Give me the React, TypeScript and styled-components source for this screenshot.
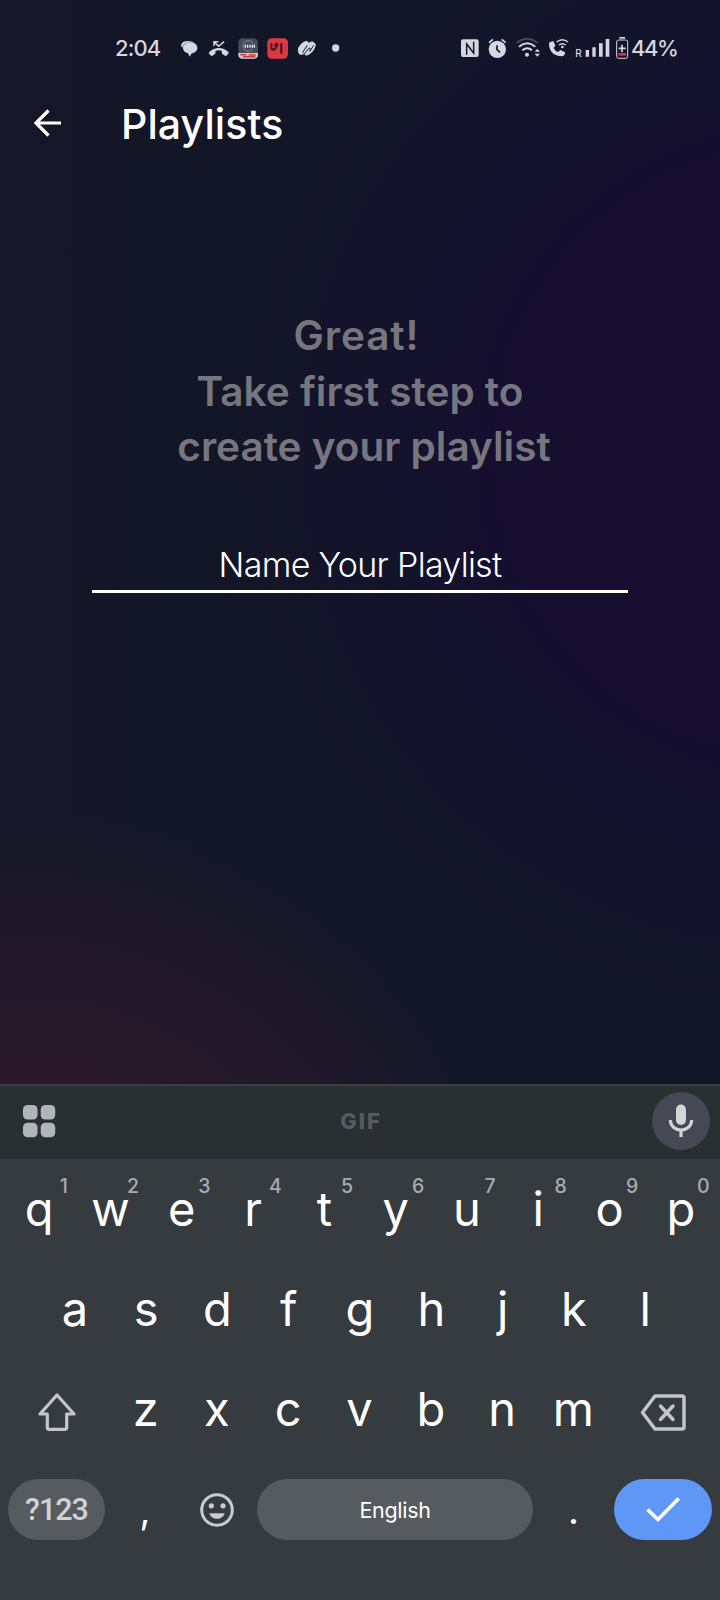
import React from 'react';
import styled, { createGlobalStyle } from 'styled-components';

const GlobalStyle = createGlobalStyle`
  * { box-sizing: border-box; }
  html, body { margin: 0; padding: 0; background: #141628; }
  svg { display: block; flex: none; }
`;

const Screen = styled.div`
  width: 720px;
  height: 1600px;
  display: flex;
  flex-direction: column;
  overflow: hidden;
  color: #fff;
  font-family: Inter, Roboto, sans-serif;
  background:
    radial-gradient(circle at 30px 1300px, #291829 0, #291829 230px, #20182a 350px, rgba(25, 23, 39, 0.9) 430px, rgba(19, 22, 39, 0) 490px),
    radial-gradient(circle at 800px 450px, #160f30 0, #160f30 300px, rgba(20, 17, 46, 0.75) 400px, rgba(19, 22, 39, 0) 560px),
    linear-gradient(90deg, #151627, #131627 240px);
`;

const StatusBar = styled.header`
  height: 96px;
  display: flex;
  align-items: center;
  justify-content: space-between;
  padding: 0 44px 0 115px;
  color: #d5d7e0;
`;

const StatusGroup = styled.div`
  display: flex;
  align-items: center;
`;

const StatusText = styled.span<{ $width: number; $spacing: number }>`
  width: ${(p) => p.$width}px;
  font-size: 22px;
  font-weight: 450;
  line-height: 24px;
  letter-spacing: ${(p) => p.$spacing}px;
  white-space: nowrap;
`;

const AppBar = styled.nav`
  height: 56px;
  display: flex;
  align-items: center;
  padding-left: 33px;
  gap: 60px;
`;

const Title = styled.h1`
  margin: 0;
  font-size: 41px;
  font-weight: 500;
  line-height: 56px;
  letter-spacing: 0.1px;
`;

const BackIcon = styled.svg`
  margin-bottom: 3px;
`;

const Main = styled.main`
  flex: 1;
  display: flex;
  flex-direction: column;
  align-items: center;
  padding-top: 156px;
`;

const Prompt = styled.p`
  margin: 0;
  display: flex;
  flex-direction: column;
  align-items: center;
  color: #77767f;
  font-size: 40.5px;
  font-weight: 600;
  line-height: 55.5px;
`;

const PromptLine = styled.span<{ $spacing: number; $shift?: number }>`
  letter-spacing: ${(p) => p.$spacing}px;
  margin-left: ${(p) => p.$shift ?? 0}px;
  white-space: nowrap;
`;

const NameField = styled.div`
  width: 536px;
  height: 53px;
  margin-top: 65px;
  border-bottom: 3px solid #fff;
  text-align: center;
  font-size: 34px;
  font-weight: 300;
  line-height: 49px;
  letter-spacing: -0.7px;
`;

const Keyboard = styled.section`
  height: 516px;
  display: flex;
  flex-direction: column;
  background: #363b3f;
`;

const Toolbar = styled.div`
  height: 75px;
  display: flex;
  align-items: center;
  justify-content: space-between;
  padding: 0 10px 4px 22px;
  border-top: 2px solid #3a4043;
  background: #2a2f32;
`;

const GifLabel = styled.span`
  color: #565b5f;
  font-size: 22px;
  font-weight: 800;
  letter-spacing: 2px;
  margin-left: 14px;
`;

const MicButton = styled.div`
  width: 58px;
  height: 58px;
  border-radius: 50%;
  display: flex;
  align-items: center;
  justify-content: center;
  background: #464953;
`;

const KeyRow = styled.div<{ $inset: number }>`
  height: 100px;
  display: flex;
  align-items: center;
  padding: 0 ${(p) => p.$inset}px;
`;

const Key = styled.div<{ $width?: number; $drop?: number }>`
  position: relative;
  width: ${(p) => p.$width ?? 71.3}px;
  height: 100px;
  display: flex;
  align-items: center;
  justify-content: center;
  padding-top: ${(p) => p.$drop ?? 0}px;
  font-size: 47px;
  font-weight: 400;
  line-height: 60px;
`;

const PunctuationKey = styled(Key)`
  font-size: 38px;
`;

const Hint = styled.span`
  position: absolute;
  top: 15px;
  right: 7px;
  text-align: right;
  color: #a9abaf;
  font-size: 19.5px;
  font-weight: 450;
  line-height: 24px;
`;

const Pill = styled.div<{ $width: number; $color: string; $ml?: number }>`
  width: ${(p) => p.$width}px;
  height: 61px;
  margin-left: ${(p) => p.$ml ?? 0}px;
  border-radius: 31px;
  display: flex;
  align-items: center;
  justify-content: center;
  background: ${(p) => p.$color};
`;

const SymbolsLabel = styled.span`
  color: #d0d2d6;
  font-size: 30.5px;
  font-weight: 500;
  letter-spacing: -1px;
  font-family: Roboto, Inter, sans-serif;
`;

const SpaceLabel = styled.span`
  font-size: 21.5px;
  letter-spacing: -0.3px;
`;

const BottomRow = styled(KeyRow)`
  height: 101px;
`;

/* Status glyphs share one 24px-high drawing band, three units to the pixel. */
function Glyph({ x, w, children }: { x: number; w: number; children: React.ReactNode }) {
  return (
    <svg width={w / 3} height={24} viewBox={`${x} 48 ${w} 72`} fill="currentColor">
      {children}
    </svg>
  );
}

const numbered = 'qwertyuiop'.split('').map((letter, i) => ({ letter, hint: String((i + 1) % 10) }));

export default function App() {
  return (
    <>
      <GlobalStyle />
      <Screen>
        <StatusBar>
          <StatusGroup>
            <StatusText $width={65} $spacing={-0.9}>2:04</StatusText>
            <Glyph x={240} w={84}>
              <path d="M245 82c-5-10 4-19 18-19 10 0 17 3 19 6-14-5-32 0-34 13z" />
              <path d="M249 84c0-9 9-17 22-17s21 8 21 17c0 8-7 15-18 17l-5 9-5-10c-9-2-15-8-15-16z" />
            </Glyph>
            <Glyph x={324} w={87}>
              <path d="M341 65l15 14 16-14M342 78V65h13" fill="none" stroke="currentColor" strokeWidth="4.5" />
              <path d="M328 96c16-16 41-16 57 0 2 2 1 4-1 6l-5 5c-2 1-4 1-6-1l-7-5-1-9c-6-2-12-2-18 0l-1 9-7 5c-2 2-4 2-6 1l-5-5c-2-2-2-4 0-6z" />
            </Glyph>
            <Glyph x={411} w={87}>
              <rect x="415" y="55" width="59" height="61" rx="13" fill="#454b57" />
              <path d="M415 99h59v5c0 8-5 12-12 12h-35c-7 0-12-4-12-12z" fill="#c9ccd2" />
              <circle cx="445" cy="78" r="16" fill="none" stroke="#858b95" strokeWidth="3" />
              <rect x="432" y="71" width="34" height="15" fill="#454b57" />
              <path d="M436 74v9M443 74v9M450 74v9M457 74v9M463 74v9" stroke="#fff" strokeWidth="3.5" />
              <path d="M421 104h18M429 110h37M446 105h21" stroke="#d8343d" strokeWidth="4.5" />
            </Glyph>
            <Glyph x={498} w={90}>
              <rect x="502" y="55" width="62" height="61" rx="13" fill="#dc3941" />
              <path d="M514 70v12c0 10 12 8 14 0l6-11M524 78l7-9M544 70v31" fill="none" stroke="#4b1425" strokeWidth="6.5" />
            </Glyph>
            <Glyph x={588} w={100}>
              <path d="M594 92c-2-9 8-21 18-27 8-4 15-1 13 5 8-7 16-7 17-1 5 0 7 5 4 11-3 11-12 20-21 25-6 3-11 1-12-4-6 5-18 6-19-9z" />
              <path d="M608 97l14-21M610 99c4 3 7 0 9-4l6-9c5-5 7 0 4 5M629 95l12-19" fill="none" stroke="#141628" strokeWidth="3" />
            </Glyph>
            <Glyph x={688} w={40}>
              <circle cx="708" cy="84" r="11" />
            </Glyph>
          </StatusGroup>
          <StatusGroup>
            <Glyph x={60} w={80}>
              <rect x="63" y="58" width="53" height="53" rx="6" />
              <path d="M80 104V72l12 15M101 65v34L89 84" fill="none" stroke="#141628" strokeWidth="4.5" />
            </Glyph>
            <Glyph x={140} w={84}>
              <circle cx="171" cy="88" r="26" />
              <path d="M146 68l12-10M196 68l-12-10" stroke="currentColor" strokeWidth="5" />
              <path d="M170 76v13l9 8" fill="none" stroke="#141628" strokeWidth="5" />
            </Glyph>
            <Glyph x={224} w={99}>
              <path d="M229 69q31-25 63 0" fill="none" stroke="#454857" strokeWidth="6" />
              <path d="M236 80q25-20 49 0M246 91q15-12 29 0" fill="none" stroke="currentColor" strokeWidth="6" />
              <circle cx="260" cy="104" r="6" />
              <path d="M283 95l8-9 8 9zM283 101l8 9 8-9z" />
            </Glyph>
            <Glyph x={323} w={82}>
              <path d="M329 67l6-3c3-1 5 0 6 3l4 10-5 6c3 7 7 11 13 13l7-6 11 5c3 1 4 3 3 6l-3 5c-1 2-3 3-6 3-25-1-39-16-39-37 0-3 1-4 3-5z" />
              <path d="M349 66q17-14 34 0M356 75q10-8 20 0" fill="none" stroke="currentColor" strokeWidth="4.500" />
              <circle cx="366" cy="81" r="4" />
            </Glyph>
            <Glyph x={405} w={120}>
              <text x="406" y="111" fontSize="30" fontWeight="500" fill="currentColor">R</text>
              <path d="M437 90h10v20h-10zM457 82h10v28h-10zM477 70h11v40h-11zM497 57h11v53h-11z" />
            </Glyph>
            <Glyph x={525} w={48}>
              <path d="M538 51h17v5h-17z" />
              <rect x="530" y="60" width="33" height="55" rx="6" fill="none" stroke="currentColor" strokeWidth="3" />
              <path d="M535 99h23v8h-23z" fill="#e02f3c" />
              <path d="M546 74v22M536 85h21" stroke="currentColor" strokeWidth="5" />
            </Glyph>
            <StatusText $width={45} $spacing={-1.5}>44%</StatusText>
          </StatusGroup>
        </StatusBar>

        <AppBar>
          <BackIcon width="28" height="28" viewBox="0 0 28 28" fill="none" stroke="#fff" strokeWidth="3.2">
            <path d="M28 14H3M15.500 1.500L3 14l12.500 12.500" />
          </BackIcon>
          <Title>Playlists</Title>
        </AppBar>

        <Main>
          <Prompt>
            <PromptLine $spacing={0.9} $shift={-7}>Great!</PromptLine>
            <PromptLine $spacing={0}>Take first step to</PromptLine>
            <PromptLine $spacing={0} $shift={8}>create your playlist</PromptLine>
          </Prompt>
          <NameField>Name Your Playlist</NameField>
        </Main>

        <Keyboard>
          <Toolbar>
            <svg width="34" height="34" viewBox="0 0 34 34" fill="#b1b4b8">
              <rect x="1" y="1" width="14.500" height="14.500" rx="4.500" />
              <rect x="18.700" y="1" width="14.500" height="14.500" rx="4.500" />
              <rect x="1" y="18.700" width="14.500" height="14.500" rx="4.500" />
              <rect x="18.700" y="18.700" width="14.500" height="14.500" rx="4.500" />
            </svg>
            <GifLabel>GIF</GifLabel>
            <MicButton>
              <svg width="26" height="34" viewBox="0 0 26 34">
                <rect x="8" y="0.500" width="10" height="20.500" rx="5" fill="#d3d5da" />
                <path d="M2.300 16C3 29.500 23 29.500 23.700 16M13 26v7" fill="none" stroke="#d3d5da" strokeWidth="3.200" />
              </svg>
            </MicButton>
          </Toolbar>
          <KeyRow $inset={3.5}>
            {numbered.map(({ letter, hint }) => (
              <Key key={letter}>
                {letter}
                <Hint>{hint}</Hint>
              </Key>
            ))}
          </KeyRow>
          <KeyRow $inset={39.2}>
            {'asdfghjkl'.split('').map((letter) => (
              <Key key={letter}>{letter}</Key>
            ))}
          </KeyRow>
          <KeyRow $inset={3}>
            <Key $width={107} $drop={6}>
              <svg width="40" height="44" viewBox="0 0 40 44" fill="none" stroke="#c4c6cb" strokeWidth="3.200" strokeLinejoin="round">
                <path d="M20 5L3 24H10.300V37.500Q10.300 39.300 12 39.300H28Q29.700 39.300 29.700 37.500V24H37Z" />
              </svg>
            </Key>
            {'zxcvbnm'.split('').map((letter) => (
              <Key key={letter}>{letter}</Key>
            ))}
            <Key $width={107} $drop={5}>
              <svg width="46" height="44" viewBox="0 0 46 44" fill="none" stroke="#c4c6cb" strokeWidth="3.500" strokeLinejoin="round" strokeLinecap="round">
                <path d="M15 6H42Q44 6 44 8V37Q44 39 42 39H15L2.500 22.500Z" />
                <path d="M20.500 16l12.500 13.500M33 16L20.500 29.500" />
              </svg>
            </Key>
          </KeyRow>
          <BottomRow $inset={8}>
            <Pill $width={97} $color="#565b5f">
              <SymbolsLabel>?123</SymbolsLabel>
            </Pill>
            <PunctuationKey $width={80}>,</PunctuationKey>
            <Key $width={63}>
              <svg width="34" height="34" viewBox="0 0 34 34">
                <circle cx="17" cy="17" r="15.300" fill="none" stroke="#c9cbd0" strokeWidth="3" />
                <circle cx="11.300" cy="12.800" r="2.600" fill="#c9cbd0" />
                <circle cx="23" cy="12.800" r="2.600" fill="#c9cbd0" />
                <path d="M9.300 20.300h15.400c-1 3.500-4 5.500-7.700 5.500s-6.700-2-7.700-5.500z" fill="#c9cbd0" />
              </svg>
            </Key>
            <Pill $width={276} $color="#565b5f" $ml={9}>
              <SpaceLabel>English</SpaceLabel>
            </Pill>
            <PunctuationKey $width={81}>.</PunctuationKey>
            <Pill $width={98} $color="#5f97f6">
              <svg width="34" height="26" viewBox="0 0 34 26" fill="none" stroke="#fff" strokeWidth="3.700">
                <path d="M1.500 12.500L12 22.500L32.700 1.500" />
              </svg>
            </Pill>
          </BottomRow>
        </Keyboard>
      </Screen>
    </>
  );
}
